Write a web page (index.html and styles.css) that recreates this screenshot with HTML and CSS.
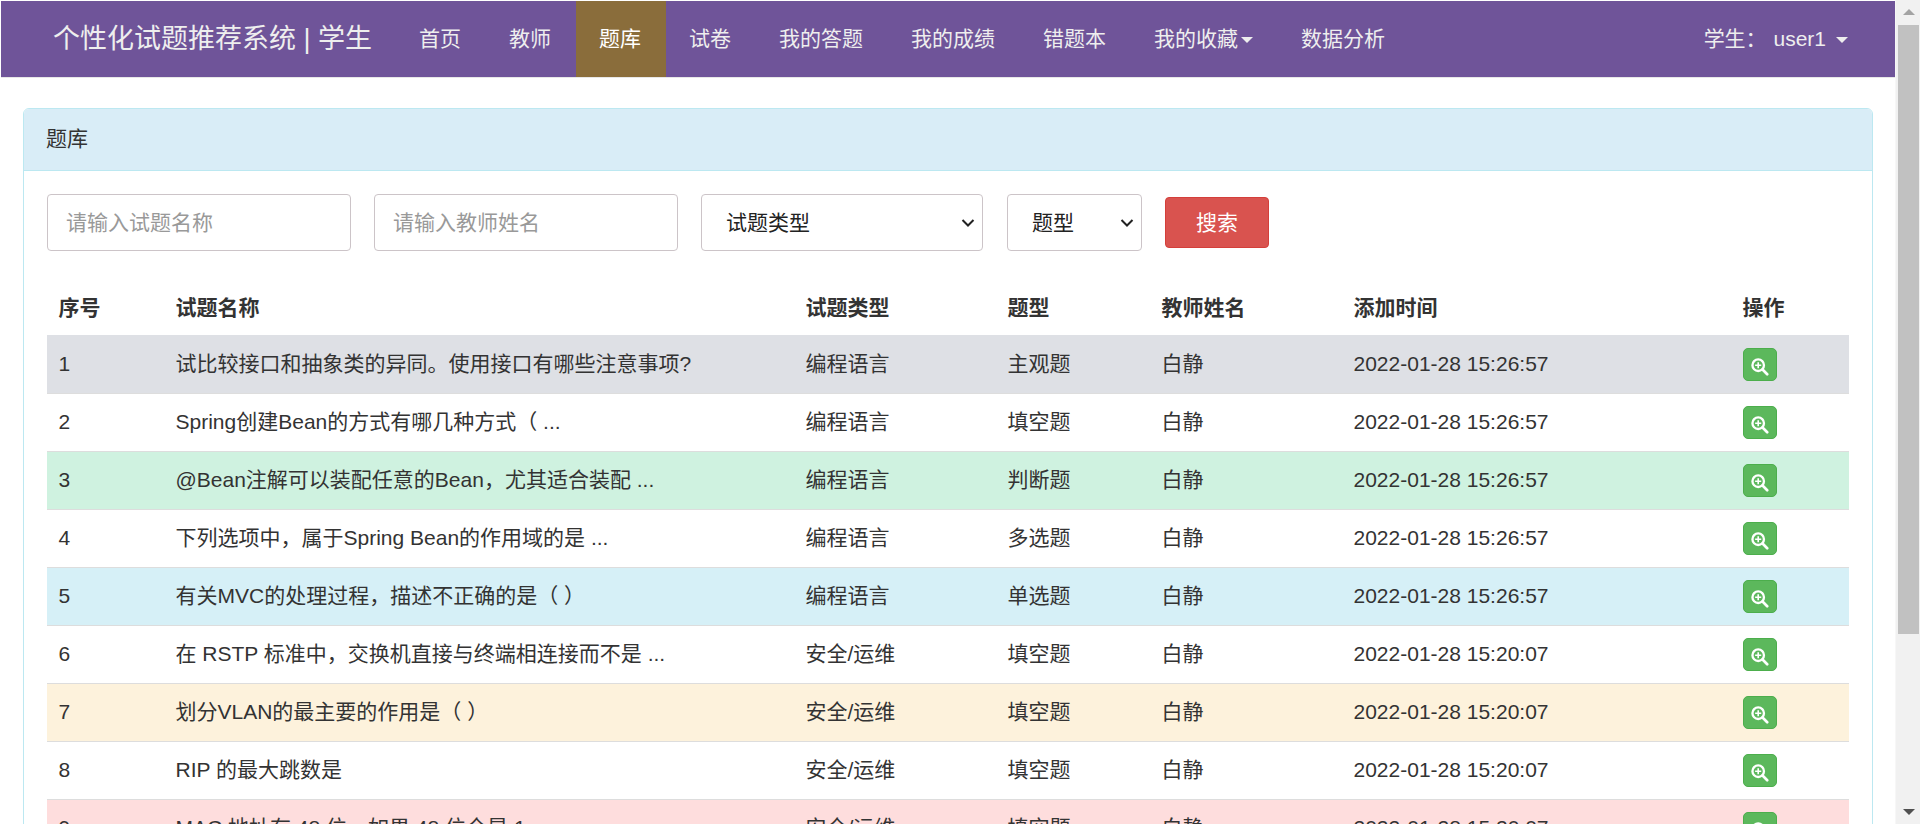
FILE: index.html
```html
<!DOCTYPE html>
<html lang="zh-CN">
<head>
<meta charset="utf-8">
<title>题库</title>
<link rel="stylesheet" href="styles.css">
</head>
<body>
<svg class="sprite" width="0" height="0" aria-hidden="true">
  <symbol id="zoom" viewBox="0 0 20 20">
    <circle cx="8" cy="8" r="6.4" fill="none" stroke="#fff" stroke-width="2.6"/>
    <path d="M12.8 12.8L18 18" fill="none" stroke="#fff" stroke-width="3" stroke-linecap="round"/>
    <path d="M8 4.6V11.4M4.6 8H11.4" fill="none" stroke="#fff" stroke-width="1.8"/>
  </symbol>
</svg>
<div class="page">
  <main class="main">
    <nav class="navbar">
      <a class="brand">个性化试题推荐系统 | 学生</a>
      <ul class="nav">
        <li><a>首页</a></li>
        <li><a>教师</a></li>
        <li class="active"><a>题库</a></li>
        <li><a>试卷</a></li>
        <li><a>我的答题</a></li>
        <li><a>我的成绩</a></li>
        <li><a>错题本</a></li>
        <li><a>我的收藏<span class="caret"></span></a></li>
        <li><a>数据分析</a></li>
      </ul>
      <div class="user">学生： <span class="user-name">user1</span><span class="caret caret-user"></span></div>
    </nav>
    <section class="panel">
      <header class="panel-heading">题库</header>
      <div class="panel-body">
        <form class="filters">
          <input class="control w-input" type="text" placeholder="请输入试题名称">
          <input class="control w-input" type="text" placeholder="请输入教师姓名">
          <select class="control w-type"><option>试题类型</option></select>
          <select class="control w-kind"><option>题型</option></select>
          <button class="btn-search" type="button">搜索</button>
        </form>
        <table class="table">
          <thead>
            <tr>
              <th class="c1">序号</th><th class="c2">试题名称</th><th class="c3">试题类型</th><th class="c4">题型</th><th class="c5">教师姓名</th><th class="c6">添加时间</th><th class="c7">操作</th>
            </tr>
          </thead>
          <tbody>
            <tr class="r-active"><td>1</td><td>试比较接口和抽象类的异同。使用接口有哪些注意事项?</td><td>编程语言</td><td>主观题</td><td>白静</td><td>2022-01-28 15:26:57</td><td><button class="btn-view" type="button"><svg class="ico"><use href="#zoom"/></svg></button></td></tr>
            <tr><td>2</td><td>Spring创建Bean的方式有哪几种方式（ ...</td><td>编程语言</td><td>填空题</td><td>白静</td><td>2022-01-28 15:26:57</td><td><button class="btn-view" type="button"><svg class="ico"><use href="#zoom"/></svg></button></td></tr>
            <tr class="r-success"><td>3</td><td>@Bean注解可以装配任意的Bean，尤其适合装配 ...</td><td>编程语言</td><td>判断题</td><td>白静</td><td>2022-01-28 15:26:57</td><td><button class="btn-view" type="button"><svg class="ico"><use href="#zoom"/></svg></button></td></tr>
            <tr><td>4</td><td>下列选项中，属于Spring Bean的作用域的是 ...</td><td>编程语言</td><td>多选题</td><td>白静</td><td>2022-01-28 15:26:57</td><td><button class="btn-view" type="button"><svg class="ico"><use href="#zoom"/></svg></button></td></tr>
            <tr class="r-info"><td>5</td><td>有关MVC的处理过程，描述不正确的是（ ）</td><td>编程语言</td><td>单选题</td><td>白静</td><td>2022-01-28 15:26:57</td><td><button class="btn-view" type="button"><svg class="ico"><use href="#zoom"/></svg></button></td></tr>
            <tr><td>6</td><td>在 RSTP 标准中，交换机直接与终端相连接而不是 ...</td><td>安全/运维</td><td>填空题</td><td>白静</td><td>2022-01-28 15:20:07</td><td><button class="btn-view" type="button"><svg class="ico"><use href="#zoom"/></svg></button></td></tr>
            <tr class="r-warning"><td>7</td><td>划分VLAN的最主要的作用是（ ）</td><td>安全/运维</td><td>填空题</td><td>白静</td><td>2022-01-28 15:20:07</td><td><button class="btn-view" type="button"><svg class="ico"><use href="#zoom"/></svg></button></td></tr>
            <tr><td>8</td><td>RIP 的最大跳数是</td><td>安全/运维</td><td>填空题</td><td>白静</td><td>2022-01-28 15:20:07</td><td><button class="btn-view" type="button"><svg class="ico"><use href="#zoom"/></svg></button></td></tr>
            <tr class="r-danger"><td>9</td><td>MAC 地址有 48 位，如果 48 位全是 1 ...</td><td>安全/运维</td><td>填空题</td><td>白静</td><td>2022-01-28 15:20:07</td><td><button class="btn-view" type="button"><svg class="ico"><use href="#zoom"/></svg></button></td></tr>
          </tbody>
        </table>
      </div>
    </section>
  </main>
  <aside class="scrollbar" aria-hidden="true">
    <span class="arrow arrow-up"></span>
    <span class="thumb"></span>
    <span class="arrow arrow-down"></span>
  </aside>
</div>
</body>
</html>
```
FILE: styles.css
```css
* { box-sizing: border-box; }
html, body { margin: 0; height: 824px; overflow: hidden; background: #fff; }
body {
  font-family: "Liberation Sans", "Noto Sans CJK SC", sans-serif;
  font-size: 21px;
  line-height: 30px;
  color: #333;
}
.sprite { position: absolute; }
.page { display: flex; height: 824px; overflow: hidden; }
.main { width: 1895px; flex: none; padding: 1px 0 0 1px; }

.navbar {
  display: flex;
  align-items: flex-start;
  height: 77px;
  background: #6f5499;
  border-bottom: 1px solid #e7e7e7;
  color: #eee;
}
.brand { margin: 18px 0 0 52px; width: 343px; font-size: 27px; line-height: 40px; color: #eee; white-space: nowrap; }
.nav { display: flex; list-style: none; margin: 0; padding: 0; }
.nav a { display: block; height: 76px; padding: 23px 25px 0 23px; white-space: nowrap; }
.nav .active a { background: #8a6d3b; color: #fff; }
.caret {
  display: inline-block;
  width: 0;
  height: 0;
  margin-left: 3px;
  vertical-align: middle;
  border-top: 6px solid currentColor;
  border-left: 6px solid transparent;
  border-right: 6px solid transparent;
}
.user { margin: 23px 0 0 auto; padding-right: 47px; white-space: nowrap; }
.user-name { margin-left: 1px; }
.caret-user { margin-left: 10px; }

.panel {
  margin: 30px 22px 0;
  border: 1px solid #bce8f1;
  border-radius: 6px 6px 0 0;
  height: 800px;
}
.panel-heading {
  height: 62px;
  padding: 15px 22px;
  background: #d9edf7;
  border-bottom: 1px solid #bce8f1;
  border-radius: 5px 5px 0 0;
}
.panel-body { padding: 23px 23px 0; }

.filters { display: flex; align-items: flex-start; gap: 23px; height: 57px; margin-bottom: 26px; }
.control {
  height: 57px;
  background: #fff;
  border: 1px solid #ccc4c8;
  border-radius: 4px;
  font: inherit;
  color: #222;
  padding: 0 18px;
}
.control::placeholder { color: #999; opacity: 1; }
select.control {
  appearance: none;
  padding: 0 40px 0 24px;
  background: #fff url("data:image/svg+xml,%3Csvg xmlns='http://www.w3.org/2000/svg' width='14' height='10' viewBox='0 0 14 10'%3E%3Cpath d='M1.5 2L7 7.5L12.5 2' fill='none' stroke='%23222' stroke-width='2'/%3E%3C/svg%3E") no-repeat right 7px center;
}
.w-input { width: 304px; }
.w-type { width: 282px; }
.w-kind { width: 135px; margin-left: 1px; }
.btn-search {
  width: 104px;
  height: 51px;
  margin-top: 3px;
  background: #d9534f;
  border: 1px solid #d43f3a;
  border-radius: 4px;
  font: inherit;
  color: #fff;
  padding: 0;
}

.table { width: 1802px; border-collapse: collapse; table-layout: fixed; }
.table th, .table td { height: 58px; padding: 0 11.5px; text-align: left; white-space: nowrap; overflow: hidden; }
.table th { font-weight: 700; padding-top: 3px; }
.table td { border-top: 1px solid #ddd; }
.table tbody tr:first-child td { border-top: 0; }
.c1 { width: 117px; }
.c2 { width: 630px; }
.c3 { width: 202px; }
.c4 { width: 154px; }
.c5 { width: 192px; }
.c6 { width: 389px; }
.c7 { width: 118px; }
.r-active { background: #dee0e5; }
.r-success { background: #cff2e0; }
.r-info { background: #d6f0f7; }
.r-warning { background: #fdf2dc; }
.r-danger { background: #fedddd; }

.btn-view {
  display: block;
  width: 34px;
  height: 33px;
  margin-top: 1px;
  padding: 0;
  background: #5cb85c;
  border: 1px solid #4cae4c;
  border-radius: 5px;
}
.ico { display: block; width: 18px; height: 18px; margin: 5px 0 0 7px; }

.scrollbar {
  flex: 1;
  position: relative;
  background: #f1f1f1;
  border-left: 1px solid #f7f7f7;
}
.thumb { position: absolute; left: 2px; top: 25px; width: 21px; height: 609px; background: #c1c1c1; }
.arrow { position: absolute; left: 7px; width: 0; height: 0; border-left: 6px solid transparent; border-right: 6px solid transparent; }
.arrow-up { top: 9px; border-bottom: 6px solid #a3a3a3; }
.arrow-down { bottom: 9px; border-top: 6px solid #505050; }
```
